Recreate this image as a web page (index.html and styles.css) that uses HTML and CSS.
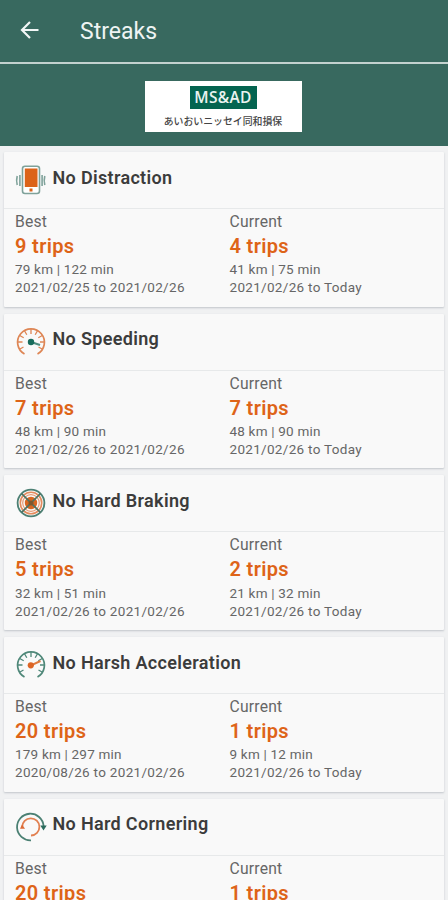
FILE: index.html
```html
<!DOCTYPE html>
<html lang="en">
<head>
<meta charset="utf-8">
<title>Streaks</title>
<link rel="stylesheet" href="styles.css">
</head>
<body>
<header class="appbar">
  <svg class="back" viewBox="0 0 20 20"><path d="M19.500 10H3M11 2L3 10l8 8"/></svg>
  <h1>Streaks</h1>
</header>
<div class="banner">
  <div class="logo">
    <div class="logo-mark">MS&amp;AD</div>
    <div class="logo-name">あいおいニッセイ同和損保</div>
  </div>
</div>
<main class="list">
  <section class="card">
    <div class="card-head">
      <svg class="icon" viewBox="0 0 30 30"><g fill="none" stroke="#7fa29a" stroke-width="1.600"><rect x="6.500" y="1.200" width="17" height="27.300" rx="2.500" fill="#fff"/><path d="M3.900 10v11M1.200 11Q0 15.500 1.200 20M26.100 10v11M28.800 11Q27.600 15.500 28.800 20"/></g><path fill="#dc6319" d="M8.800 3.500h12.700v18.500H8.800zM13.500 23.500h3v3h-3z"/></svg>
      <h2>No Distraction</h2>
    </div>
    <div class="stats">
      <div class="stat"><p class="label">Best</p><p class="trips">9 trips</p><p class="meta">79 km | 122 min</p><p class="meta dates">2021/02/25 to 2021/02/26</p></div>
      <div class="stat"><p class="label">Current</p><p class="trips">4 trips</p><p class="meta">41 km | 75 min</p><p class="meta dates">2021/02/26 to Today</p></div>
    </div>
  </section>
  <section class="card">
    <div class="card-head">
      <svg class="icon" viewBox="0 0 30 30"><g fill="none" stroke="#de8655"><path stroke-width="1.700" d="M8.500 27A13.400 13.400 0 1 1 21.500 27"/><path stroke-width="1.300" d="M15 2v5M8.500 3.700l2.300 4M21.500 3.700l-2.300 4M3.700 8.500l4 2.300M26.300 8.500l-4 2.300M2 15h4.500M28 15h-4M4 22l3.500-2M26 22l-3.500-2"/></g><path stroke="#4d8b7e" stroke-width="2" d="M15 15l9 3"/><circle cx="15" cy="15" r="3.200" fill="#176c5c"/></svg>
      <h2>No Speeding</h2>
    </div>
    <div class="stats">
      <div class="stat"><p class="label">Best</p><p class="trips">7 trips</p><p class="meta">48 km | 90 min</p><p class="meta dates">2021/02/26 to 2021/02/26</p></div>
      <div class="stat"><p class="label">Current</p><p class="trips">7 trips</p><p class="meta">48 km | 90 min</p><p class="meta dates">2021/02/26 to Today</p></div>
    </div>
  </section>
  <section class="card">
    <div class="card-head">
      <svg class="icon" viewBox="0 0 30 30"><g fill="none"><circle cx="15" cy="15" r="13.400" stroke="#4d8074" stroke-width="1.800"/><circle cx="15" cy="15" r="10.700" stroke="#e48b5d" stroke-width="1.600"/><circle cx="15" cy="15" r="8.300" stroke="#e69b75" stroke-width="1.200"/><circle cx="15" cy="15" r="6.200" fill="#d76620"/><path stroke="#4b7465" stroke-width="1.700" d="M5.500 5.500l19 19M24.500 5.500l-19 19"/></g><circle cx="15" cy="15" r="2.500" fill="#7b582f"/></svg>
      <h2>No Hard Braking</h2>
    </div>
    <div class="stats">
      <div class="stat"><p class="label">Best</p><p class="trips">5 trips</p><p class="meta">32 km | 51 min</p><p class="meta dates">2021/02/26 to 2021/02/26</p></div>
      <div class="stat"><p class="label">Current</p><p class="trips">2 trips</p><p class="meta">21 km | 32 min</p><p class="meta dates">2021/02/26 to Today</p></div>
    </div>
  </section>
  <section class="card">
    <div class="card-head">
      <svg class="icon" viewBox="0 0 30 30"><g fill="none" stroke="#4f8879"><path stroke-width="1.700" d="M8.500 27A13.400 13.400 0 1 1 21.500 27"/><path stroke-width="1.300" d="M15 2v5M8.500 3.700l2.300 4M21.500 3.700l-2.300 4M3.700 8.500l4 2.300M26.300 8.500l-4 2.300M2 15h4.500M28 15h-4M4 22l3.500-2M26 22l-3.500-2"/></g><path stroke="#e07a3d" stroke-width="2" d="M15 15.300l9.500-4.300"/><circle cx="14.800" cy="15.300" r="3.100" fill="#dc6525"/></svg>
      <h2>No Harsh Acceleration</h2>
    </div>
    <div class="stats">
      <div class="stat"><p class="label">Best</p><p class="trips">20 trips</p><p class="meta">179 km | 297 min</p><p class="meta dates">2020/08/26 to 2021/02/26</p></div>
      <div class="stat"><p class="label">Current</p><p class="trips">1 trips</p><p class="meta">9 km | 12 min</p><p class="meta dates">2021/02/26 to Today</p></div>
    </div>
  </section>
  <section class="card">
    <div class="card-head">
      <svg class="icon" viewBox="0 0 30 30"><g fill="none" stroke-width="1.800"><path stroke="#4b8073" d="M15 28.300A13.300 13.300 0 1 1 27.600 14"/><path stroke="#e28051" d="M6.200 15a8.600 8.600 0 1 1 8.800 8.500"/></g><path fill="#2a6b5d" d="M24.300 13.500h6.400l-3.200 5z"/><path fill="#dc6a35" d="M4 16.800l2-4.300 3 4.300z"/></svg>
      <h2>No Hard Cornering</h2>
    </div>
    <div class="stats">
      <div class="stat"><p class="label">Best</p><p class="trips">20 trips</p></div>
      <div class="stat"><p class="label">Current</p><p class="trips">1 trips</p></div>
    </div>
  </section>
</main>
</body>
</html>
```
FILE: styles.css
```css
* { box-sizing: border-box; }
body {
  margin: 0;
  height: 900px;
  overflow: hidden;
  background: #f0f1f2;
  font-family: Roboto, "Liberation Sans", sans-serif;
  color: #666;
}
h1, h2, p { margin: 0; }
.appbar {
  display: flex;
  align-items: center;
  height: 64px;
  padding: 0 19px 2px;
  background: #38695f;
  border-bottom: 2px solid #c3d2cf;
}
.back {
  width: 20px;
  height: 20px;
  fill: none;
  stroke: #f2f7f6;
  stroke-width: 2.2;
}
.appbar h1 {
  margin: 3px 0 0 41px;
  font-size: 23px;
  line-height: 28px;
  font-weight: 400;
  color: #eef4f3;
}
.banner {
  display: flex;
  justify-content: center;
  height: 82px;
  padding: 17px 2px 0 0;
  background: #38695f;
}
.logo {
  display: flex;
  flex-direction: column;
  align-items: center;
  width: 157px;
  height: 51px;
  padding-top: 5px;
  background: #fff;
}
.logo-mark {
  width: 67px;
  height: 23px;
  background: #046450;
  color: #eaf4f1;
  font: 600 15.5px/23px "Open Sans", sans-serif;
  letter-spacing: .3px;
  text-align: center;
}
.logo-name {
  margin-top: 5px;
  font: 500 9.9px/14px "Noto Sans CJK JP", sans-serif;
  color: #444;
  white-space: nowrap;
}
.list {
  display: flex;
  flex-direction: column;
  gap: 7px;
  padding: 6px 4px 0;
}
.card {
  flex: none;
  height: 154.7px;
  background: #f9f9f9;
  border-radius: 1px;
  box-shadow: 0 1px 2px rgba(60, 70, 90, .25);
}
.card-head {
  display: flex;
  align-items: center;
  height: 57px;
  padding: 0 11px;
  border-bottom: 1px solid #e7e9ea;
}
.icon {
  width: 30px;
  height: 30px;
  margin-left: .5px;
  overflow: visible;
}
.card-head h2 {
  margin: -5px 0 0 7px;
  font-size: 18px;
  line-height: 24px;
  font-weight: 600;
  letter-spacing: .33px;
  color: #3c3c3c;
}
.stats {
  display: grid;
  grid-template-columns: 214.5px 1fr;
  padding: 2px 0 0 11px;
}
.label {
  font-size: 15.7px;
  line-height: 22px;
  letter-spacing: .2px;
}
.trips {
  font-size: 20px;
  line-height: 27.4px;
  font-weight: 600;
  letter-spacing: .35px;
  color: #de6418;
}
.meta {
  font-size: 13.5px;
  line-height: 18px;
  letter-spacing: .2px;
}
.dates { letter-spacing: .31px; }
```
